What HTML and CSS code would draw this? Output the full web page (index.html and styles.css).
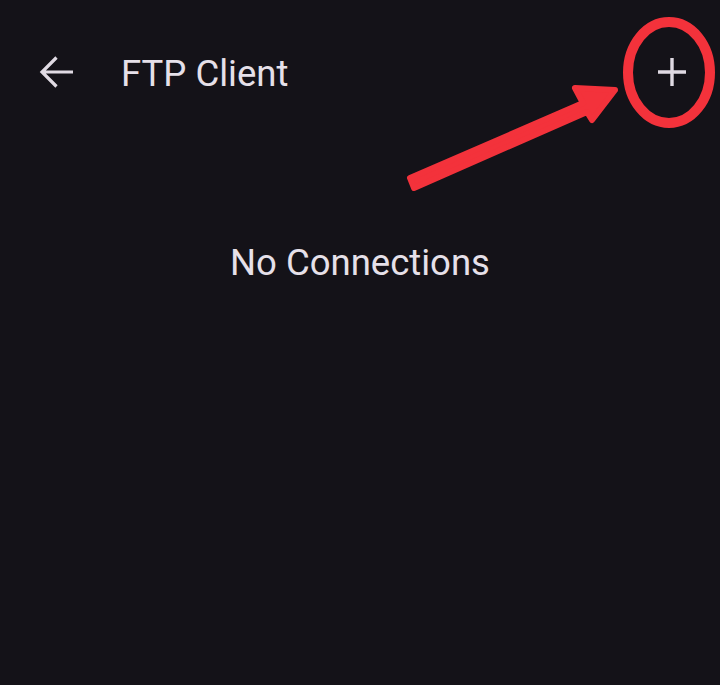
FILE: index.html
```html
<!DOCTYPE html>
<html>
<head>
<meta charset="utf-8">
<link rel="stylesheet" href="styles.css">
</head>
<body>
<div class="screen">
  <header class="topbar">
    <div class="icon-btn back">
      <svg width="48" height="48" viewBox="0 0 48 48"><path d="M41 24H11M24.5 9.5L10 24L24.5 38.5" fill="none" stroke="#e0dae3" stroke-width="3.2" stroke-linecap="butt" stroke-linejoin="miter"/></svg>
    </div>
    <h1 class="title">FTP Client</h1>
    <div class="spacer"></div>
    <div class="icon-btn add">
      <svg width="48" height="48" viewBox="0 0 48 48"><path d="M10 24H38M24 10V38" fill="none" stroke="#e0dae3" stroke-width="3.4"/></svg>
    </div>
  </header>
  <main class="content">
    <p class="empty">No Connections</p>
  </main>
  <svg class="annotation" width="720" height="685" viewBox="0 0 720 685">
    <ellipse cx="669" cy="72.5" rx="41" ry="50.5" fill="none" stroke="#f3323b" stroke-width="10"/>
    <polygon points="410,178 583,103 575,88 615,90 592,120 587,112 414,188" fill="#f3323b" stroke="#f3323b" stroke-width="6" stroke-linejoin="round"/>
  </svg>
</div>
</body>
</html>
```
FILE: styles.css
```css
html, body {
  margin: 0;
  padding: 0;
  background: #141218;
}
.screen {
  position: relative;
  width: 720px;
  height: 685px;
  overflow: hidden;
  background: #141218;
  font-family: Roboto, "Noto Sans", sans-serif;
  color: #e6e0e9;
}
.topbar {
  display: flex;
  align-items: center;
  height: 144px;
  padding: 0 0 0 32px;
}
.icon-btn {
  width: 48px;
  height: 48px;
  display: flex;
}
.title {
  margin: 3px 0 0 41px;
  font-size: 36.5px;
  line-height: 44px;
  font-weight: 400;
  letter-spacing: 0;
}
.spacer {
  flex: 1;
}
.add {
  margin-right: 24px;
}
.content {
  display: flex;
  justify-content: center;
}
.empty {
  margin: 96.5px 0 0 0;
  font-size: 36.5px;
  line-height: 44px;
}
.annotation {
  position: absolute;
  left: 0;
  top: 0;
  pointer-events: none;
}
```
